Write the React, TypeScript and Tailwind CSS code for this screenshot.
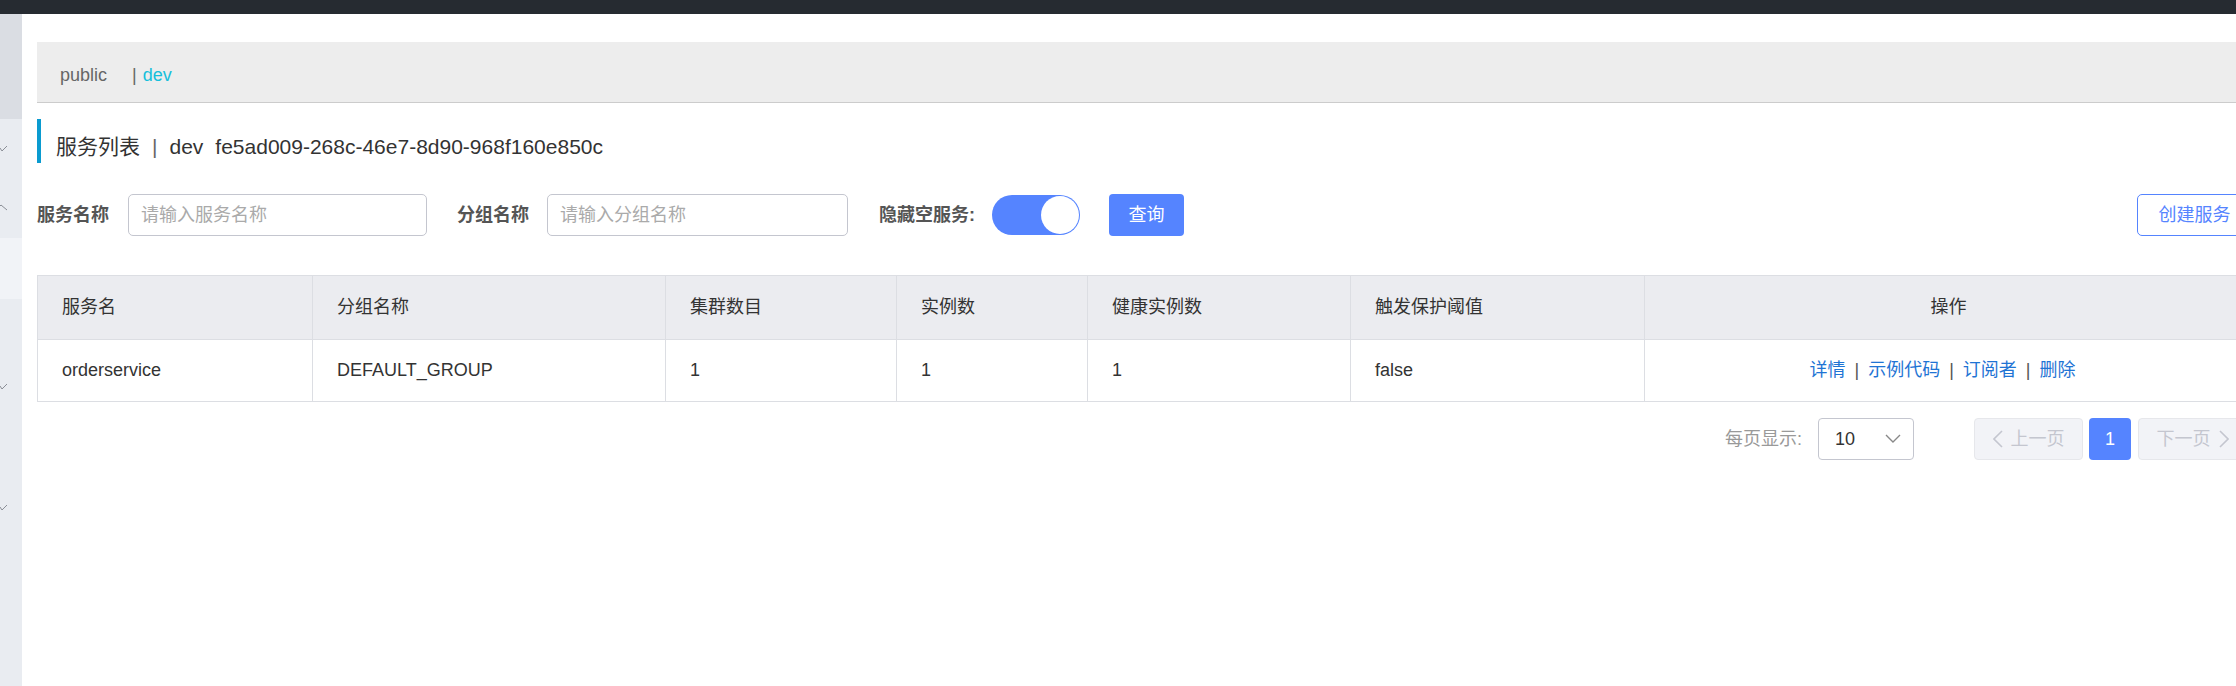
import React from "react";

const cols = [
  { title: "服务名", w: "w-[275px]" },
  { title: "分组名称", w: "w-[353px]" },
  { title: "集群数目", w: "w-[231px]" },
  { title: "实例数", w: "w-[191px]" },
  { title: "健康实例数", w: "w-[263px]" },
  { title: "触发保护阈值", w: "w-[294px]" },
  { title: "操作", w: "w-[608px]" },
];

const rows = [
  { name: "orderservice", group: "DEFAULT_GROUP", clusters: "1", instances: "1", healthy: "1", threshold: "false" },
];

function SideChevron({ up }: { up?: boolean }) {
  return (
    <svg width="8" height="8" viewBox="0 0 8 8" className="block">
      <polyline
        points={up ? "0,2 1,1 7,6" : "0,3 2,6 7,1"}
        fill="none"
        stroke="#8a8e96"
        strokeWidth="1"
      />
    </svg>
  );
}

function Sidebar() {
  return (
    <aside className="w-[22px] shrink-0 flex flex-col bg-[#e9ecf1]">
      <div className="h-[105px] bg-[#dadde3]" />
      <div className="h-[59px] flex items-center"><SideChevron /></div>
      <div className="h-[60px] flex items-center"><SideChevron up /></div>
      <div className="h-[61px] bg-[#f1f3f7]" />
      <div className="h-[58px]" />
      <div className="h-[60px] flex items-center"><SideChevron /></div>
      <div className="h-[61px]" />
      <div className="h-[60px] flex items-center"><SideChevron /></div>
    </aside>
  );
}

function Toolbar() {
  return (
    <div className="mt-[31px] flex items-center h-[42px] text-[18px]">
      <span className="font-bold text-[#555]">服务名称</span>
      <div className="ml-[19px] w-[299px] h-[42px] border border-[#c4c6cf] rounded-[5px] flex items-center pl-[12px] text-[#aaa]">
        请输入服务名称
      </div>
      <span className="ml-[30px] font-bold text-[#555]">分组名称</span>
      <div className="ml-[18px] w-[301px] h-[42px] border border-[#c4c6cf] rounded-[5px] flex items-center pl-[12px] text-[#aaa]">
        请输入分组名称
      </div>
      <span className="ml-[31px] font-bold text-[#555]">隐藏空服务:</span>
      <div className="ml-[17px] w-[88px] h-[40px] rounded-full bg-[#5584ff] flex items-center justify-end p-[1px]">
        <div className="w-[38px] h-[38px] rounded-full bg-white" />
      </div>
      <button className="ml-[29px] w-[75px] h-[42px] rounded-[4px] bg-[#5584ff] text-white">查询</button>
      <button className="ml-auto w-[115px] h-[42px] rounded-[5px] border border-[#5584ff] text-[#5584ff] bg-white">
        创建服务
      </button>
    </div>
  );
}

function ServiceTable() {
  return (
    <table className="mt-[39px] w-[2215px] table-fixed border-collapse text-[18px] text-[#333]">
      <colgroup>
        {cols.map((c) => (
          <col key={c.title} className={c.w} />
        ))}
      </colgroup>
      <thead>
        <tr className="h-[64px] bg-[#ebecf0]">
          {cols.map((c, i) => (
            <th
              key={c.title}
              className={`border border-[#dcdee3] px-[24px] font-normal ${i === 6 ? "text-center" : "text-left"}`}
            >
              {c.title}
            </th>
          ))}
        </tr>
      </thead>
      <tbody>
        {rows.map((r) => (
          <tr key={r.name} className="h-[62px]">
            <td className="border border-[#dcdee3] px-[24px]">{r.name}</td>
            <td className="border border-[#dcdee3] px-[24px]">{r.group}</td>
            <td className="border border-[#dcdee3] px-[24px]">{r.clusters}</td>
            <td className="border border-[#dcdee3] px-[24px]">{r.instances}</td>
            <td className="border border-[#dcdee3] px-[24px]">{r.healthy}</td>
            <td className="border border-[#dcdee3] px-[24px]">{r.threshold}</td>
            <td className="border border-[#dcdee3] pl-[24px] pr-[36px] text-center">
              <a className="text-[#1f74d4]">详情</a>
              <span className="mx-[9px] text-[#555]">|</span>
              <a className="text-[#1f74d4]">示例代码</a>
              <span className="mx-[9px] text-[#555]">|</span>
              <a className="text-[#1f74d4]">订阅者</a>
              <span className="mx-[9px] text-[#555]">|</span>
              <a className="text-[#1f74d4]">删除</a>
            </td>
          </tr>
        ))}
      </tbody>
    </table>
  );
}

function Pager() {
  return (
    <div className="mt-[16px] flex items-center justify-end pr-[5px] text-[18px]">
      <span className="text-[#999]">每页显示:</span>
      <div className="ml-[16px] w-[96px] h-[42px] border border-[#c4c6cf] rounded-[4px] flex items-center justify-between pl-[16px] pr-[12px] text-[#333]">
        <span>10</span>
        <svg width="16" height="10" viewBox="0 0 16 10">
          <polyline points="1,1 8,8 15,1" fill="none" stroke="#888" strokeWidth="1.4" />
        </svg>
      </div>
      <button className="ml-[60px] w-[109px] h-[42px] rounded-[4px] border border-[#e6e7eb] bg-[#f2f3f7] text-[#c4c6cf] flex items-center justify-center gap-[8px]">
        <svg width="10" height="18" viewBox="0 0 10 18">
          <polyline points="9,1 1,9 9,17" fill="none" stroke="#c4c6cf" strokeWidth="1.6" />
        </svg>
        上一页
      </button>
      <button className="ml-[6px] w-[42px] h-[42px] rounded-[4px] bg-[#5584ff] text-white">1</button>
      <button className="ml-[7px] w-[109px] h-[42px] rounded-[4px] border border-[#e6e7eb] bg-[#f2f3f7] text-[#c4c6cf] flex items-center justify-center gap-[8px]">
        下一页
        <svg width="10" height="18" viewBox="0 0 10 18">
          <polyline points="1,1 9,9 1,17" fill="none" stroke="#c4c6cf" strokeWidth="1.6" />
        </svg>
      </button>
    </div>
  );
}

export default function App() {
  return (
    <div className="w-[2236px] h-[686px] overflow-hidden bg-white font-['Liberation_Sans','Noto_Sans_CJK_SC',sans-serif]">
      <div className="h-[14px] bg-[#262b31]" />
      <div className="flex h-[672px]">
        <Sidebar />
        <main className="w-[2215px] shrink-0 ml-[15px] pt-[28px]">
          <div className="h-[61px] bg-[#ededed] border-b border-[#cccccc] flex items-center pl-[23px] pt-[6px] text-[18px]">
            <span className="text-[#666]">public</span>
            <span className="ml-[25px] text-[#666]">|</span>
            <span className="ml-[6px] text-[#16bfdb]">dev</span>
          </div>
          <div className="mt-[16px] h-[44px] border-l-4 border-[#0a9bd0] pl-[15px] pt-[14px] text-[21px] leading-[28px] text-[#333]">
            服务列表<span className="mx-[12px] text-[#666]">|</span>dev<span className="ml-[12px]">fe5ad009-268c-46e7-8d90-968f160e850c</span>
          </div>
          <Toolbar />
          <ServiceTable />
          <Pager />
        </main>
      </div>
    </div>
  );
}
